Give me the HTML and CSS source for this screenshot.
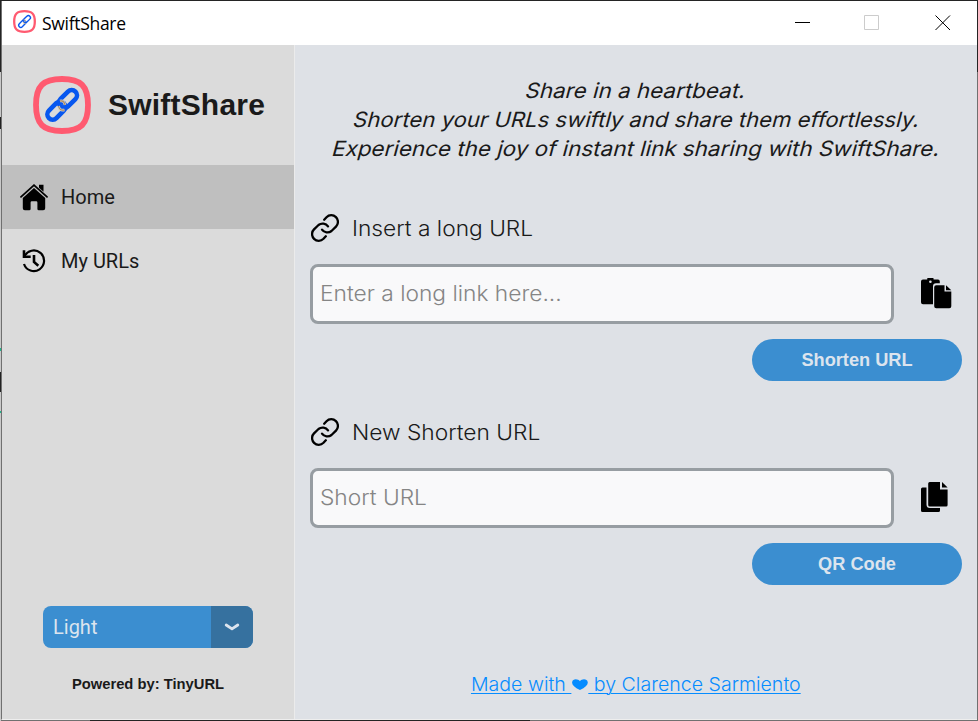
FILE: index.html
```html
<!DOCTYPE html>
<html lang="en">
<head>
<meta charset="utf-8">
<title>SwiftShare</title>
<link rel="stylesheet" href="styles.css">
</head>
<body>
<svg class="defs" width="0" height="0" aria-hidden="true">
  <symbol id="logo" viewBox="0 0 58 58">
    <path d="M29 3C48 3 55 10 55 29S48 55 29 55 3 48 3 29 10 3 29 3Z" fill="none" stroke="#ff5a70" stroke-width="5.8"/>
    <g class="links" fill="none" stroke="#0757ef" transform="rotate(-45 29 29)">
      <rect x="10.5" y="23.7" width="21" height="10.6" rx="5.3"/>
      <rect x="27" y="23.7" width="21" height="10.6" rx="5.3"/>
    </g>
    <path d="M27 25q4-1 5 4M25.5 30q1 5 6 4" fill="none" stroke="#d5cdc2" stroke-width="2.6"/>
    <path d="M27 25q4-1 5 4M25.5 30q1 5 6 4" fill="none" stroke="#a98a62" stroke-width="1.1"/>
  </symbol>
  <symbol id="chain" viewBox="0 0 28 28">
    <g fill="none" stroke="#000" stroke-width="2.3" stroke-linecap="round">
      <path d="M13.2 5.7 15.5 3.2A6.6 6.6 0 0 1 25 12.6L20.5 17a6.6 6.6 0 0 1-9.5-1.4"/>
      <path d="M14.8 22.3 12.5 24.8A6.6 6.6 0 0 1 3 15.4L7.5 11a6.6 6.6 0 0 1 9.5 1.4"/>
    </g>
  </symbol>
</svg>
<div class="window">
  <header class="titlebar">
    <svg class="mini-logo"><use href="#logo"/></svg>
    <span class="caption">SwiftShare</span>
    <svg class="controls" width="156" height="16" viewBox="0 0 156 16" fill="none">
      <path d="M0 7.5h15" stroke="#000"/>
      <path d="M69.5.5h14v14h-14z" stroke="#ccc"/>
      <path d="m140.5.5 14.5 14.5m0-14.5-14.5 14.5" stroke="#000"/>
    </svg>
  </header>
  <div class="content">
    <aside class="sidebar">
      <div class="brand"><svg class="logo"><use href="#logo"/></svg><h1>SwiftShare</h1></div>
      <nav>
        <a class="nav-item active">
          <svg width="28" height="27" viewBox="0 0 28 27"><path d="M1 12.8 14 1.2 27 12.8" fill="none" stroke="#000" stroke-width="1.8" stroke-linecap="round"/><path d="M19 .8h4.5v7L19 3.8ZM14 4 25.2 14V24.3q0 2-2 2h-4.4q-1.4 0-1.4-1.4v-6.4q0-1.2-1.2-1.2h-4.4q-1.2 0-1.2 1.2v6.4q0 1.4-1.4 1.4H4.8q-2 0-2-2V14Z"/></svg>
          <span>Home</span>
        </a>
        <a class="nav-item">
          <svg width="28" height="24" viewBox="0 0 28 24"><g fill="none" stroke="#000" stroke-width="2.2"><path d="M4.4 7.5A10.3 10.3 0 1 1 4 15"/><path d="M4 1.3v6.5h6.7M14 6v7l4.3 3.8" stroke-width="2.6"/></g></svg>
          <span>My URLs</span>
        </a>
      </nav>
      <div class="sidebar-bottom">
        <div class="select"><span>Light</span><i><svg width="16" height="10" viewBox="0 0 16 10"><path d="m2.2 3 5.8 3.9L13.8 3" fill="none" stroke="#dce4ee" stroke-width="2.8" stroke-linecap="round" stroke-linejoin="round"/></svg></i></div>
        <p class="powered">Powered by: TinyURL</p>
      </div>
    </aside>
    <main>
      <p class="tagline"><span class="t1">Share in a heartbeat.</span><span class="t2">Shorten your URLs swiftly and share them effortlessly.</span><span class="t3">Experience the joy of instant link sharing with SwiftShare.</span></p>
      <section class="group">
        <h2><svg><use href="#chain"/></svg><span class="wide">Insert a long URL</span></h2>
        <div class="row">
          <div class="field"><span class="wide">Enter a long link here...</span></div>
          <svg class="clip" width="31" height="31" viewBox="0 0 31 31"><path d="M2 1.5h4.2a3 3 0 0 1 6.4 0H17q1.8 0 1.8 2v1.8H15q-3 0-3 3v17.9H2q-2 0-2-2V3.5q0-2 2-2Z"/><circle cx="9.4" cy="3.7" r="1.3" fill="#dee1e6"/><path d="M15.2 7.3h8.3v6.2h6.8v14.7q0 2-2 2H15.2q-2 0-2-2V9.3q0-2 2-2ZM25 7.3l5.3 5H25Z"/></svg>
        </div>
        <button>Shorten URL</button>
      </section>
      <section class="group">
        <h2><svg><use href="#chain"/></svg><span class="wide">New Shorten URL</span></h2>
        <div class="row">
          <div class="field"><span class="wide">Short URL</span></div>
          <svg class="clip" width="31" height="31" viewBox="0 0 31 31"><path d="M0 7q0-1.5 1.5-1.5h4v17q0 3.5 3.5 3.5h10v2.5q0 1.5-1.5 1.5h-16Q0 30 0 28.5ZM8.7 0H19v7.5h7.6V23q0 1.5-1.5 1.5H8.7q-1.5 0-1.5-1.5V1.5Q7.2 0 8.7 0ZM21 0l5.6 5.5H21Z"/></svg>
        </div>
        <button>QR Code</button>
      </section>
      <a class="credit">Made with <svg width="16" height="12" viewBox="0 0 17 13"><path d="M8.5 12Q0 7.5.5 3.5C1-.5 6.5-.5 8.5 2.5c2-3 7.5-3 8 1Q17 7.5 8.5 12Z" fill="#068cff"/></svg> by Clarence Sarmiento</a>
    </main>
  </div>
</div>
</body>
</html>
```
FILE: styles.css
```css
* { box-sizing: border-box; }
body {
  margin: 0;
  height: 721px;
  padding: 1px;
  overflow: hidden;
  background: linear-gradient(#242424 0 72px, #c9c9c9 72px 117px, #222 117px 129px, #c9c9c9 129px 348px, #20b58a 348px 351px, #c9c9c9 351px 372px, #222 372px 392px, #c9c9c9 392px 411px, #20b58a 411px 413px, #c9c9c9 413px) 0 0 / 1px 100% no-repeat,
    linear-gradient(90deg, #707070 0 90px, #242424 90px 530px, #707070 530px) 0 100% / 100% 1px no-repeat,
    linear-gradient(#242424 0 72px, #707070 72px) 100% 0 / 1px 100% no-repeat, #242424;
}
.defs { display: block; }
h1, h2, p { margin: 0; font-weight: 400; }
svg { flex: none; }
.window { height: 719px; display: flex; flex-direction: column; border-left: 1px solid #707070; border-bottom: 1px solid #eee; }
.titlebar { height: 44px; flex: none; background: #fff; display: flex; align-items: center; padding: 0 26px 0 12px; }
.mini-logo { width: 23px; height: 23px; margin: -3px 5px 0 -1px; --link: 3.4; }
.links { stroke-width: var(--link, 4.6); }
.caption { font: 17.5px/24px "Open Sans", sans-serif; letter-spacing: -.3px; color: #000; margin: -1px 0 0 1px; }
.controls { margin-left: auto; }
.content { flex: 1; min-height: 0; display: grid; grid-template-columns: 293px 1fr; }
.sidebar { background: #dbdbdb; border-right: 1px solid #ebebeb; display: flex; flex-direction: column; color: #1a1a1a; }
.brand { height: 120px; display: flex; align-items: center; padding-left: 31px; gap: 17px; }
.logo { width: 58px; height: 58px; }
h1 { font: bold 30px/34px "Liberation Sans", sans-serif; letter-spacing: .2px; }
.nav-item { height: 64px; display: flex; align-items: center; gap: 13px; padding-left: 18px; font: 20px/24px Roboto, sans-serif; }
.active { background: #bfbfbf; }
.sidebar-bottom { margin-top: auto; display: flex; flex-direction: column; align-items: center; padding-bottom: 25px; }
.select { width: 210px; height: 42px; border-radius: 8px; overflow: hidden; display: flex; background: #3b8ed0; color: #dce4ee; font: 20px/42px Roboto, sans-serif; }
.select span { flex: 1; padding-left: 10px; }
.select i { width: 42px; background: #36719f; display: flex; align-items: center; justify-content: center; }
.powered { margin-top: 26px; font: bold 14.75px/20px "Liberation Sans", sans-serif; }
main { background: #dee1e6; padding: 31px 15px 0; display: flex; flex-direction: column; font: 300 21px/29px Inter, sans-serif; color: #1a1a1a; }
.tagline { display: flex; flex-direction: column; align-items: center; height: 123px; white-space: nowrap; padding-left: 1px; }
.t1 { transform: scaleX(1.067) skewX(-14deg); }
.t2 { transform: scaleX(1.053) skewX(-14deg); }
.t3 { transform: scaleX(1.068) skewX(-14deg); }
.wide { display: inline-block; transform: scaleX(1.083); transform-origin: 0 50%; }
.group { height: 204px; display: flex; flex-direction: column; }
h2 { height: 58px; display: flex; align-items: center; gap: 13px; margin-bottom: 7px; font: inherit; }
h2 svg { width: 28px; height: 28px; margin-left: 1px; }
.row { display: flex; align-items: center; gap: 27px; margin-bottom: 15px; }
.clip { margin-top: -2px; }
.field { width: 584px; height: 60px; border: 3px solid #979da2; border-radius: 8px; background: #f9f9fa; color: #858585; line-height: 54px; padding-left: 7px; }
button { align-self: flex-end; width: 210px; height: 42px; border: 0; border-radius: 21px; background: #3b8ed0; color: #dce4ee; font: bold 18.2px/42px "Liberation Sans", sans-serif; padding: 0; }
.credit { align-self: center; margin-top: 64px; font-size: 18.5px; line-height: 26px; transform: scaleX(1.058); color: #068cff; white-space: nowrap; text-decoration: underline; text-decoration-thickness: 1px; text-underline-offset: 2px; }
```
